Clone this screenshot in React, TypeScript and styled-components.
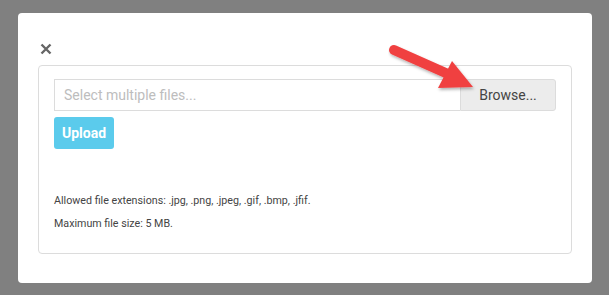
import React from 'react'
import styled, { createGlobalStyle } from 'styled-components'

const GlobalStyle = createGlobalStyle`
    html, body {
        margin: 0;
        padding: 0;
        background: #808080;
        font-family: Roboto, "Liberation Sans", Arial, sans-serif;
    }
`;

const App = () => {
  return (
    <Overlay>
      <GlobalStyle />
      <Modal>
        <CloseBtn aria-label="close">
          <svg width="12" height="12" viewBox="0 0 12 12">
            <path d="M1.5 1.5 L10.5 10.5 M10.5 1.5 L1.5 10.5" stroke="#666" strokeWidth="2.4" strokeLinecap="butt" />
          </svg>
        </CloseBtn>
        <Panel>
          <InputGroup>
            <FileInput placeholder="Select multiple files..." readOnly />
            <BrowseBtn>Browse...</BrowseBtn>
          </InputGroup>
          <UploadBtn>Upload</UploadBtn>
          <Notes>
            <Note>Allowed file extensions: .jpg, .png, .jpeg, .gif, .bmp, .jfif.</Note>
            <Note>Maximum file size: 5 MB.</Note>
          </Notes>
        </Panel>
        <Arrow width="100" height="60" viewBox="0 0 100 60">
          <defs>
            <filter id="sh" x="-20%" y="-20%" width="140%" height="140%">
              <feDropShadow dx="1" dy="2" stdDeviation="1.5" floodColor="#000" floodOpacity="0.3" />
            </filter>
          </defs>
          <g filter="url(#sh)">
            <path d="M6 6 L60 30" stroke="#f04141" strokeWidth="10" strokeLinecap="round" />
            <path d="M64 17 L85 43 L50 44 Z" fill="#f04141" />
          </g>
        </Arrow>
      </Modal>
    </Overlay>
  )
}

export default App


const Overlay = styled.div`
    padding: 13px 17px 12px 18px;
`;

const Modal = styled.div`
    position: relative;
    width: 574px;
    height: 270px;
    box-sizing: border-box;
    background: #fff;
    border-radius: 4px;
    padding: 30px 20px 29px 20px;
`;

const CloseBtn = styled.button`
    display: block;
    margin: 0 0 10px 2px;
    padding: 0;
    border: none;
    background: none;
    width: 12px;
    height: 12px;
    cursor: pointer;
    svg {
        display: block;
    }
`;

const Panel = styled.div`
    box-sizing: border-box;
    height: 189px;
    border: 1px solid #dcdcdc;
    border-radius: 4px;
    padding: 13px 15px;
    display: flex;
    flex-direction: column;
    align-items: flex-start;
`;

const InputGroup = styled.div`
    display: flex;
    width: 100%;
    height: 32px;
`;

const FileInput = styled.input`
    flex: 1;
    box-sizing: border-box;
    height: 32px;
    border: 1px solid #dcdcdc;
    border-right: none;
    padding: 0 9px;
    font-family: Roboto, "Liberation Sans", Arial, sans-serif;
    font-size: 14px;
    color: #555;
    outline: none;
    &::placeholder {
        color: #bdbdbd;
    }
`;

const BrowseBtn = styled.button`
    box-sizing: border-box;
    width: 96px;
    height: 32px;
    border: 1px solid #dcdcdc;
    border-radius: 0 3px 3px 0;
    background: #ececec;
    color: #444;
    font-family: Roboto, "Liberation Sans", Arial, sans-serif;
    font-size: 14px;
    padding: 0;
    cursor: pointer;
`;

const UploadBtn = styled.button`
    margin-top: 6px;
    width: 60px;
    height: 32px;
    border: none;
    border-radius: 3px;
    background: #5bcbec;
    color: #fff;
    font-family: Roboto, "Liberation Sans", Arial, sans-serif;
    font-weight: bold;
    font-size: 14px;
    padding: 0;
    cursor: pointer;
`;

const Notes = styled.div`
    margin-top: 45px;
    display: flex;
    flex-direction: column;
    gap: 9px;
`;

const Note = styled.p`
    margin: 0;
    font-size: 10.7px;
    line-height: 14px;
    color: #444;
`;

const Arrow = styled.svg`
    position: absolute;
    left: 370px;
    top: 31px;
    pointer-events: none;
`;
